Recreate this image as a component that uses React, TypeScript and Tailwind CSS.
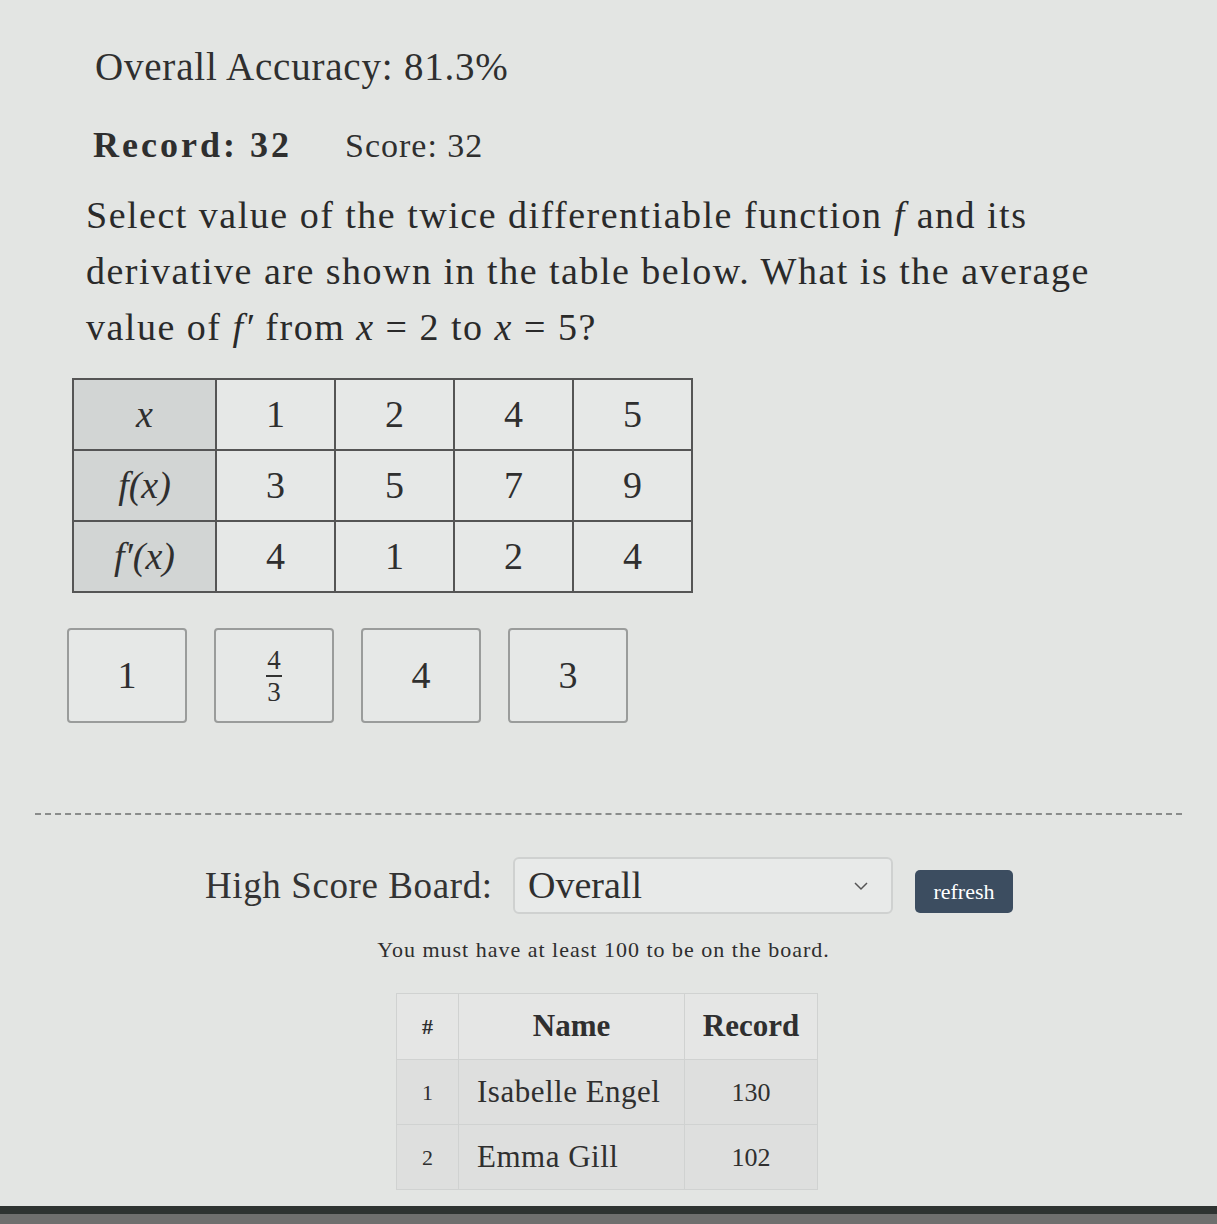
import React from "react";

const serif = { fontFamily: '"Liberation Serif", "DejaVu Serif", serif' };

function I({ children }: { children: React.ReactNode }) {
  return <span className="italic">{children}</span>;
}

export default function App() {
  const head = ["x", "f(x)", "f′(x)"];
  const rows = [
    ["1", "2", "4", "5"],
    ["3", "5", "7", "9"],
    ["4", "1", "2", "4"],
  ];
  return (
    <div
      className="w-[1217px] h-[1224px] bg-[#e3e5e3] text-[#2f2f2f] overflow-hidden flex flex-col relative"
      style={serif}
    >
      <div className="pl-[95px] pt-[43px] text-[39px] leading-[48px] tracking-[0.8px]">Overall Accuracy: 81.3%</div>
      <div className="pl-[93px] mt-[34px] flex items-baseline text-[34px] leading-[40px]">
        <span className="font-bold text-[36px] tracking-[3px] w-[252px]">Record: 32</span>
        <span className="tracking-[1px]">Score: 32</span>
      </div>
      <div className="pl-[86px] mt-[21px] text-[38px] leading-[56px] tracking-[1.5px] text-[#2a2a2a] whitespace-nowrap">
        Select value of the twice differentiable function <I>f</I> and its
        <br />
        derivative are shown in the table below. What is the average
        <br />
        value of <I>f′</I> from <I>x</I> = 2 to <I>x</I> = 5?
      </div>

      <div className="pl-[72px] mt-[23px]">
        <table className="border-collapse border-2 border-[#555] text-[38px]">
          <tbody>
            {rows.map((r, i) => (
              <tr key={i} className="h-[71px]">
                <td className="w-[143px] border-2 border-[#555] bg-[#d2d5d4] text-center">
                  <I>{head[i]}</I>
                </td>
                {r.map((c, j) => (
                  <td key={j} className="w-[119px] border-2 border-[#555] text-center bg-[#e6e8e7]">
                    {c}
                  </td>
                ))}
              </tr>
            ))}
          </tbody>
        </table>
      </div>

      <div className="pl-[67px] mt-[35px] flex gap-[27px]">
        {["1", "frac", "4", "3"].map((v, i) => (
          <div
            key={i}
            className="w-[120px] h-[95px] border-2 border-[#9a9c9b] rounded-[4px] bg-[#e6e8e7] flex items-center justify-center text-[38px]"
          >
            {v === "frac" ? (
              <span className="flex flex-col items-center text-[27px] leading-[28px]">
                <span>4</span>
                <span className="w-[16px] h-[2px] bg-[#333] my-[1px]" />
                <span>3</span>
              </span>
            ) : (
              v
            )}
          </div>
        ))}
      </div>

      <div className="mx-[35px] mt-[90px] border-t-2 border-dashed border-[#8a8c8b]" />

      <div className="mt-[42px] pl-[205px] flex items-center">
        <span className="text-[37px] tracking-[0.6px] text-[#333] w-[308px]">High Score Board:</span>
        <div className="w-[380px] h-[57px] border-2 border-[#cfd1d0] rounded-[6px] bg-[#e8eae9] flex items-center justify-between pl-[13px] pr-[22px] text-[38px]">
          <span>Overall</span>
          <svg width="16" height="10" viewBox="0 0 16 10" fill="none" stroke="#555" strokeWidth="1.5">
            <path d="M2 2l6 6 6-6" />
          </svg>
        </div>
        <button className="ml-[22px] mt-[12px] w-[98px] h-[43px] rounded-[5px] bg-[#3c4d60] text-white text-[22px]" style={serif}>
          refresh
        </button>
      </div>

      <div className="mt-[19px] text-center pr-[10px] text-[22px] tracking-[1px] text-[#2e2e2e]">
        You must have at least 100 to be on the board.
      </div>

      <div className="mt-[27px] pl-[396px]">
        <table className="border-collapse bg-[#e2e4e3] text-[31px]">
          <thead>
            <tr className="h-[66px] bg-[#e5e6e5]">
              <th className="w-[62px] border border-[#d0d2d1] text-[22px] font-bold">#</th>
              <th className="w-[226px] border border-[#d0d2d1] font-bold">Name</th>
              <th className="w-[133px] border border-[#d0d2d1] font-bold">Record</th>
            </tr>
          </thead>
          <tbody>
            {[
              ["1", "Isabelle Engel", "130"],
              ["2", "Emma Gill", "102"],
            ].map((r) => (
              <tr key={r[0]} className="h-[65px] bg-[#dedfde]">
                <td className="border border-[#d0d2d1] text-center text-[22px]">{r[0]}</td>
                <td className="border border-[#d0d2d1] pl-[18px] tracking-[0.5px]">{r[1]}</td>
                <td className="border border-[#d0d2d1] text-center text-[26px]">{r[2]}</td>
              </tr>
            ))}
          </tbody>
        </table>
      </div>

      <div className="absolute left-0 right-0 top-[1206px] h-[8px] bg-[#2e3331]" />
      <div className="absolute left-0 right-0 top-[1214px] h-[10px] bg-[#6f6f6e]" />
    </div>
  );
}
